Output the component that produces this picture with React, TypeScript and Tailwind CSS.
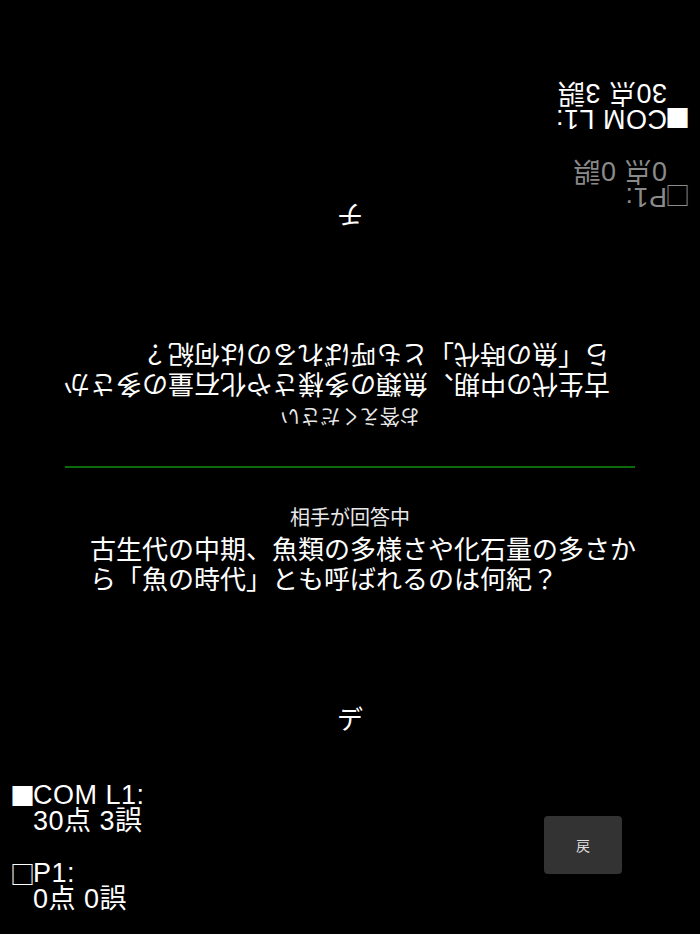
import React from 'react';

type Score = { mark: string; name: string; points: number; misses: number; dim?: boolean };

function ScoreBlock({ scores }: { scores: Score[] }) {
  return (
    <div className="flex flex-col text-[27px] leading-[26px] font-['Liberation_Sans','Noto_Sans_CJK_JP',sans-serif]">
      {scores.map((s, i) => (
        <div key={s.name} className={`flex flex-col ${i > 0 ? 'mt-[26px]' : ''} ${s.dim ? 'text-[#8a8a8a]' : 'text-white'}`}>
          <div className="flex items-center">
            <span className="w-[23px] text-[25px] font-['Noto_Sans_CJK_JP',sans-serif]">{s.mark}</span>
            <span className="tracking-[0.5px]">{s.name}:</span>
          </div>
          <div className="pl-[23px] tracking-[0.5px]">
            {s.points}点 {s.misses}誤
          </div>
        </div>
      ))}
    </div>
  );
}

function Half({
  label,
  answer,
  scores,
  scoresTop,
  withBack,
}: {
  label: string;
  answer: string;
  scores: Score[];
  scoresTop: string;
  withBack?: boolean;
}) {
  return (
    <div className="flex flex-col h-full">
      <div className="mt-[35px] text-center text-[20px] leading-[28px] text-[#e8e8e8]">{label}</div>
      <div className="ml-[90px] w-[560px] mt-[2px] text-[26px] leading-[30px] text-white">
        古生代の中期、魚類の多様さや化石量の多さから「魚の時代」とも呼ばれるのは何紀？
      </div>
      <div className="mt-[117px] h-[14px] flex items-center justify-center text-[26px] text-white">{answer}</div>
      <div className={`flex items-center justify-between pl-[10px] pr-[78px] ${scoresTop}`}>
        <ScoreBlock scores={scores} />
        {withBack && (
          <button className="w-[78px] h-[58px] mb-[4px] rounded-[4px] bg-[#333333] text-[14px] text-[#dddddd]">戻</button>
        )}
      </div>
    </div>
  );
}

export default function App() {
  return (
    <div className="w-[700px] h-[934px] bg-black overflow-hidden flex flex-col font-['Noto_Sans_CJK_JP',sans-serif]">
      <div className="h-[466px] rotate-180">
        <Half
          label="お答えください"
          answer="チ"
          scoresTop="mt-0"
          scores={[
            { mark: '□', name: 'P1', points: 0, misses: 0, dim: true },
            { mark: '■', name: 'COM L1', points: 30, misses: 3 },
          ]}
        />
      </div>
      <div className="mx-[65px] h-[2px] bg-[#0b6b0b]" />
      <div className="flex-1">
        <Half
          label="相手が回答中"
          answer="デ"
          scoresTop="mt-[58px]"
          withBack
          scores={[
            { mark: '■', name: 'COM L1', points: 30, misses: 3 },
            { mark: '□', name: 'P1', points: 0, misses: 0 },
          ]}
        />
      </div>
    </div>
  );
}
